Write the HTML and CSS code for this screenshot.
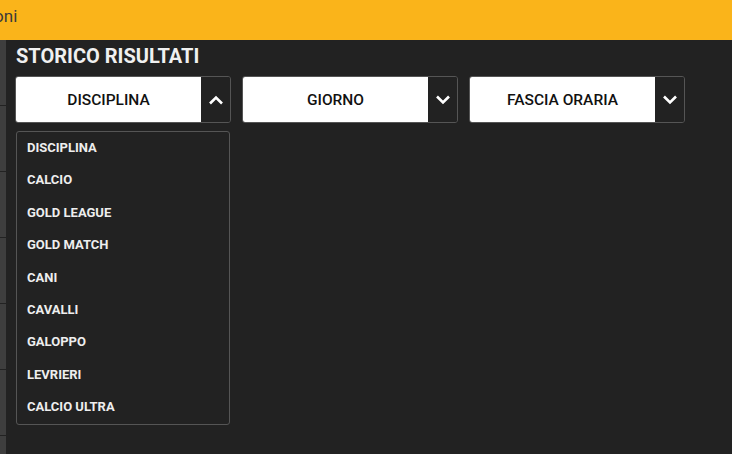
FILE: index.html
```html
<!DOCTYPE html>
<html lang="it">
<head>
  <meta charset="UTF-8">
  <title>Storico risultati</title>
  <link rel="stylesheet" href="styles.css">
</head>
<body>

  <header class="topbar">
    <span class="topbar-link">Promozioni</span>
  </header>

  <div class="page">
    <nav class="side-rail">
      <span></span><span></span><span></span><span></span><span></span><span></span><span class="last"></span>
    </nav>

    <main class="results">
      <h1 class="results-title">STORICO RISULTATI</h1>

      <div class="filters">
        <div class="filter open">
          <div class="filter-box">
            <span class="filter-label">DISCIPLINA</span>
            <span class="filter-arrow">
              <svg width="16" height="10" viewBox="0 0 16 10"><path d="M2 8.5 L8 2.5 L14 8.5" fill="none" stroke="#fff" stroke-width="2.6"/></svg>
            </span>
          </div>
          <ul class="filter-menu">
            <li>DISCIPLINA</li>
            <li>CALCIO</li>
            <li>GOLD LEAGUE</li>
            <li>GOLD MATCH</li>
            <li>CANI</li>
            <li>CAVALLI</li>
            <li>GALOPPO</li>
            <li>LEVRIERI</li>
            <li>CALCIO ULTRA</li>
          </ul>
        </div>

        <div class="filter">
          <div class="filter-box">
            <span class="filter-label">GIORNO</span>
            <span class="filter-arrow">
              <svg width="16" height="10" viewBox="0 0 16 10"><path d="M2 1.5 L8 7.5 L14 1.5" fill="none" stroke="#fff" stroke-width="2.6"/></svg>
            </span>
          </div>
        </div>

        <div class="filter">
          <div class="filter-box">
            <span class="filter-label">FASCIA ORARIA</span>
            <span class="filter-arrow">
              <svg width="16" height="10" viewBox="0 0 16 10"><path d="M2 1.5 L8 7.5 L14 1.5" fill="none" stroke="#fff" stroke-width="2.6"/></svg>
            </span>
          </div>
        </div>
      </div>
    </main>
  </div>

</body>
</html>
```

FILE: styles.css
```css
html, body {
  margin: 0;
  height: 100%;
  overflow: hidden;
}
body {
  font-family: Roboto, "Liberation Sans", Arial, sans-serif;
  background: #222222;
  color: #eeeeee;
}

.topbar {
  height: 40px;
  background: #fab41a;
  display: flex;
  align-items: center;
  overflow: hidden;
}
.topbar-link {
  font-size: 17px;
  color: #3a3a3a;
  margin-left: -69px;
  padding-bottom: 9px;
  white-space: nowrap;
}

.page {
  display: flex;
  height: calc(100% - 40px);
  overflow: hidden;
}

/* left rail with stacked tiles */
.side-rail {
  width: 6px;
  display: flex;
  flex-direction: column;
  gap: 1px;
}
.side-rail span {
  height: 65px;
  flex-shrink: 0;
  background: #3e3e3e;
}
.side-rail span.last {
  height: 19px;
}

.results {
  flex: 1;
  padding: 5px 0 0 9px;
}
.results-title {
  margin: 0 0 9px 1px;
  font-size: 20px;
  font-weight: 700;
  line-height: 22px;
  color: #f0f0f0;
}

.filters {
  display: flex;
  gap: 11px;
  align-items: flex-start;
}
.filter {
  width: 216px;
}
.filter-box {
  display: flex;
  height: 45px;
  border: 1px solid #555;
  border-radius: 3px;
  overflow: hidden;
}
.filter-label {
  flex: 1;
  background: #fff;
  color: #111;
  font-size: 15.5px;
  font-weight: 500;
  display: flex;
  align-items: center;
  justify-content: center;
}
.filter-arrow {
  width: 29px;
  background: #222;
  display: flex;
  align-items: center;
  justify-content: center;
}

.filter-menu {
  list-style: none;
  margin: 8px 0 0 1px;
  padding: 0;
  width: 212px;
  border: 1px solid #555;
  border-radius: 3px;
}
.filter-menu li {
  height: 32.4px;
  line-height: 32px;
  padding-left: 10px;
  font-size: 13px;
  font-weight: 700;
  color: #eeeeee;
}
```
